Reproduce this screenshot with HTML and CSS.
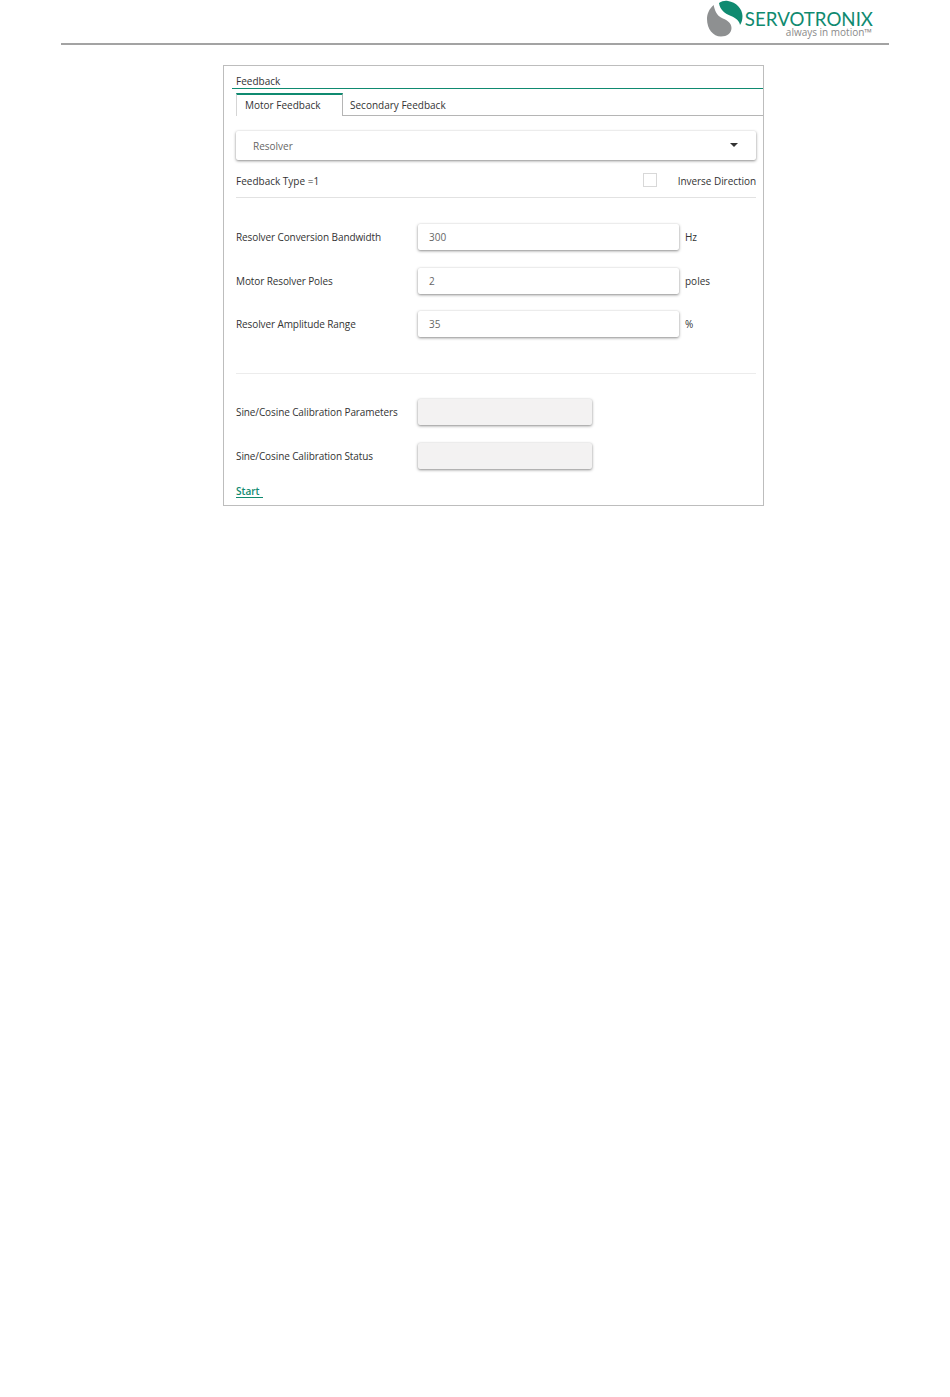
FILE: index.html
```html
<!DOCTYPE html>
<html lang="en">

<head>
    <meta charset="UTF-8">
    <title>Feedback</title>
    <link rel="stylesheet" href="styles.css">
</head>

<body>
    <header class="page-header">
        <svg class="logo-mark" width="36" height="37" viewBox="0 0 36 37">
            <path fill="#8e9091" d="M6.7 5C2 9 0 14 0 19c0 10 6 17.500 14 17.500 6 0 10.500-3.500 10.500-8.500 0-6-5.500-8-10.500-10.500C10 15.500 7.500 10 6.700 5z"/>
            <path fill="#0f8a70" d="M12 3c3-2 6-2.500 9-2 8 1 14.500 8 14.500 15 0 4-1 7-2.500 9-.5-4-4-7-9-9-6-2.500-11-6-12-13z"/>
        </svg>
        <div class="logo-text">
            <div class="logo-name">SERVOTRONIX</div>
            <div class="logo-tag">always in motion&trade;</div>
        </div>
    </header>

    <main class="panel">
        <div class="panel-title">Feedback</div>

        <div class="tabs">
            <div class="tab active">Motor Feedback</div>
            <div class="tab">Secondary Feedback</div>
        </div>

        <div class="content">
            <div class="dropdown">
                <span>Resolver</span>
                <span class="caret"></span>
            </div>

            <div class="type-row">
                <span>Feedback Type =1</span>
                <div class="inverse">
                    <span class="checkbox"></span>
                    <span class="inverse-label">Inverse Direction</span>
                </div>
            </div>

            <div class="params">
                <div class="field">
                    <label>Resolver Conversion Bandwidth</label>
                    <div class="input">300</div>
                    <span class="unit">Hz</span>
                </div>
                <div class="field">
                    <label>Motor Resolver Poles</label>
                    <div class="input">2</div>
                    <span class="unit">poles</span>
                </div>
                <div class="field">
                    <label>Resolver Amplitude Range</label>
                    <div class="input">35</div>
                    <span class="unit">%</span>
                </div>
            </div>

            <div class="calibration">
                <div class="field">
                    <label>Sine/Cosine Calibration Parameters</label>
                    <div class="input readonly"></div>
                </div>
                <div class="field">
                    <label>Sine/Cosine Calibration Status</label>
                    <div class="input readonly"></div>
                </div>
            </div>

            <a class="start-link" href="#start">Start</a>
        </div>
    </main>
</body>

</html>
```

FILE: styles.css
```css
* {
    margin: 0;
    padding: 0;
    box-sizing: border-box;
    font-family: 'Open Sans', sans-serif;
}

body {
    background-color: #fff;
    color: #333;
    font-size: 10px;
    height: 1397px;
    overflow: hidden;
}

.page-header {
    display: flex;
    justify-content: flex-end;
    gap: 2px;
    height: 45px;
    margin: 0 61px;
    padding-right: 16px;
    border-bottom: 2px solid #a3a3a3;
}

.logo-text {
    padding-top: 11px;
    text-align: right;
}

.logo-name {
    color: #0f8a70;
    font-family: 'Lato', sans-serif;
    font-size: 18.7px;
    line-height: 16px;
}

.logo-tag {
    color: #8a8a8a;
    font-size: 10px;
    line-height: 10px;
    margin-right: 1px;
}

.panel {
    width: 541px;
    height: 441px;
    margin: 20px 0 0 223px;
    border: 1px solid #bdbdbd;
}

.panel-title {
    height: 23px;
    margin-left: 8px;
    padding: 8px 0 0 4px;
    line-height: 15px;
    border-bottom: 1px solid #0f8a70;
}

.tabs {
    display: flex;
    height: 23px;
    margin-top: 4px;
    padding-left: 12px;
}

.tab {
    flex: 1;
    padding: 5px 0 0 7px;
    line-height: 15px;
    border-bottom: 1px solid #b5b5b5;
}

.tab.active {
    flex: none;
    width: 107px;
    padding: 3px 0 0 8px;
    border-top: 2px solid #0f8a70;
    border-left: 1px solid #d5d5d5;
    border-right: 1px solid #b5b5b5;
    border-bottom: none;
}

.content {
    padding: 15px 7px 0 12px;
}

.dropdown {
    display: flex;
    justify-content: space-between;
    align-items: center;
    height: 29px;
    padding: 1px 18px 0 17px;
    color: #666;
    border-radius: 2px;
    box-shadow: 0 0 2px rgba(0, 0, 0, 0.06), 0 1px 3px rgba(0, 0, 0, 0.45);
}

.caret {
    width: 0;
    height: 0;
    margin-bottom: 3px;
    border-left: 4px solid transparent;
    border-right: 4px solid transparent;
    border-top: 4px solid #333;
}

.type-row {
    display: flex;
    justify-content: space-between;
    align-items: center;
    height: 38px;
    padding-top: 4px;
    border-bottom: 1px solid #e2e2e2;
}

.inverse {
    display: flex;
    align-items: center;
    gap: 21px;
}

.inverse-label {
    letter-spacing: -0.05px;
}

.checkbox {
    width: 14px;
    height: 14px;
    margin: -2px 0 0 1px;
    border: 1px solid #d8d8d8;
}

.params {
    display: flex;
    flex-direction: column;
    gap: 17.5px;
    height: 176px;
    padding-top: 26.4px;
    border-bottom: 1px solid #ececec;
}

.calibration {
    display: flex;
    flex-direction: column;
    gap: 17.5px;
    padding-top: 25px;
}

.field {
    display: flex;
    align-items: center;
    height: 26px;
}

.field label {
    width: 182px;
    letter-spacing: -0.1px;
}

.input {
    width: 261px;
    height: 26px;
    padding: 0 11px;
    line-height: 27px;
    color: #666;
    background-color: #fff;
    border-radius: 2px;
    box-shadow: 0 0 2px rgba(0, 0, 0, 0.06), 0 1px 3px rgba(0, 0, 0, 0.45);
}

.input.readonly {
    width: 174px;
    background-color: #f3f2f2;
}

.unit {
    margin-left: 6px;
}

.start-link {
    display: block;
    width: 27px;
    height: 13px;
    margin-top: 16px;
    line-height: 13px;
    color: #0f8a70;
    font-weight: 600;
    text-decoration: none;
    border-bottom: 1px solid #0f8a70;
}
```
